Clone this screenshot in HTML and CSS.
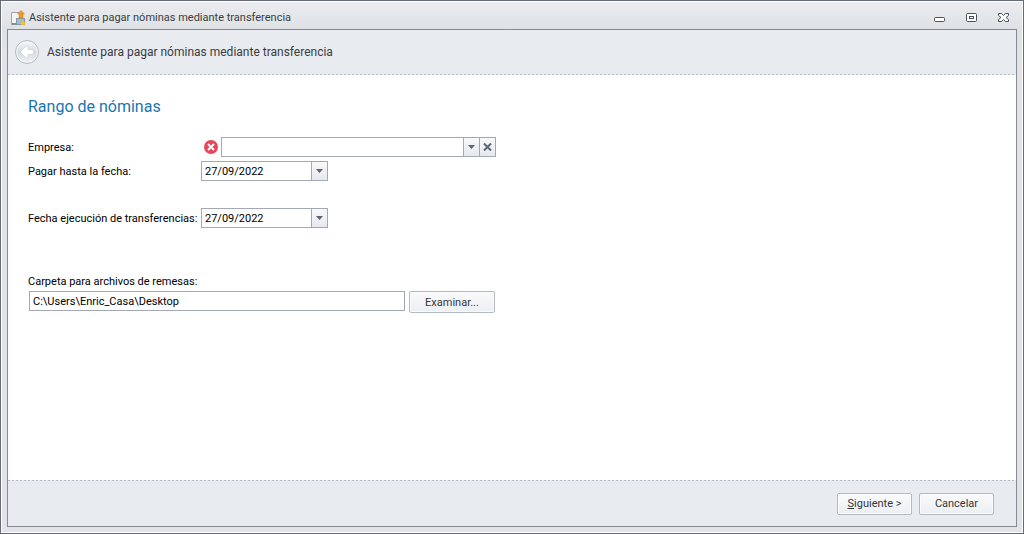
FILE: index.html
```html
<!DOCTYPE html>
<html lang="es">
  <head>
    <meta charset="UTF-8" />
    <meta name="viewport" content="width=device-width, initial-scale=1.0" />
    <title>Asistente para pagar nóminas mediante transferencia</title>
    <link rel="stylesheet" href="styles.css">
  </head>
  <body>
    <div class="window">
      <div class="titlebar">
        <svg class="app-icon" width="16" height="16" viewBox="0 0 16 16" aria-hidden="true">
          <path d="M0.500 2.500h8v12h-8z" fill="#f4f4f2" stroke="#a3a5a8" />
          <path d="M1 13h5v2h-5z" fill="#8b8d90" />
          <rect x="5.500" y="8.500" width="8" height="6" fill="#a9bccb" stroke="#8798a6" />
          <path d="M10 0.500l3.500 3.500h-1.500v4h-4v-4h-1.500z" fill="#f39a1d" stroke="#cf7a10" stroke-width="0.500" />
          <path d="M12 10.500l1 1.500 2 .5-1.500 1 .5 2-2-1-2 1 .5-2-1-1.500 2 0z" fill="#ffc41c" />
        </svg>
        <span class="title">Asistente para pagar nóminas mediante transferencia</span>
        <div class="window-controls">
          <button type="button" class="control" aria-label="Minimizar">
            <svg width="12" height="12" viewBox="0 0 12 12"><rect x="0.5" y="5.5" width="10" height="4" rx="1" fill="#fff" stroke="#4b5157" /></svg>
          </button>
          <button type="button" class="control" aria-label="Maximizar">
            <svg width="12" height="12" viewBox="0 0 12 12"><rect x="0.5" y="1.5" width="10" height="8" rx="1" fill="#fff" stroke="#4b5157" /><rect x="3.5" y="4.5" width="4" height="2" fill="#fff" stroke="#4b5157" /></svg>
          </button>
          <button type="button" class="control" aria-label="Cerrar">
            <svg width="12" height="12" viewBox="0 0 12 12"><path d="M0.500 1.500h3l2 2 2-2h3v2l-2.500 2 2.500 2v2h-3l-2-2-2 2h-3v-2l2.500-2-2.500-2z" fill="#fff" stroke="#4b5157" /></svg>
          </button>
        </div>
      </div>

      <form class="wizard" action="#" method="get">
        <header class="wizard-header">
          <button type="button" class="back" aria-label="Atrás">
            <svg width="24" height="24" viewBox="0 0 24 24">
              <defs>
                <linearGradient id="back-fill" x1="0" y1="0" x2="0" y2="1">
                  <stop offset="0" stop-color="#f3f5f8" />
                  <stop offset="0.500" stop-color="#d5dbe2" />
                  <stop offset="1" stop-color="#eef1f4" />
                </linearGradient>
              </defs>
              <circle cx="12" cy="12" r="11.500" fill="#f6f8fa" stroke="#b3b9c1" />
              <circle cx="12" cy="12" r="10" fill="url(#back-fill)" />
              <path d="M5 12l6-6q2-1 2 1.500v2h4q1.500 0 1.500 1.500v2q0 1.500-1.500 1.500h-4v2q0 2.500-2 1.500z" fill="#fff" stroke="#c3cad2" stroke-width="0.600" stroke-linejoin="round" />
            </svg>
          </button>
          <h1>Asistente para pagar nóminas mediante transferencia</h1>
        </header>

        <main class="page">
          <h2>Rango de nóminas</h2>

          <div class="field">
            <label for="empresa">Empresa:</label>
            <svg class="error" width="14" height="14" viewBox="0 0 14 14" role="img" aria-label="Error">
              <circle cx="7" cy="7" r="7" fill="#e8465a" />
              <path d="M4 4l6 6M10 4l-6 6" stroke="#fff" stroke-width="2" />
            </svg>
            <div class="combo combo-wide">
              <input type="text" id="empresa" name="empresa" />
              <button type="button" aria-label="Desplegar empresas">
                <svg width="7" height="4" viewBox="0 0 7 4"><path d="M0 0h7l-3.500 4z" fill="#5b6470" /></svg>
              </button>
              <button type="button" aria-label="Borrar empresa">
                <svg width="9" height="8" viewBox="0 0 9 8"><path d="M1 0.500l7 7M8 0.500l-7 7" stroke="#5b6470" stroke-width="2" /></svg>
              </button>
            </div>
          </div>

          <div class="field">
            <label for="hasta">Pagar hasta la fecha:</label>
            <div class="combo">
              <input type="text" id="hasta" name="hasta" value="27/09/2022" />
              <button type="button" aria-label="Abrir calendario">
                <svg width="7" height="4" viewBox="0 0 7 4"><path d="M0 0h7l-3.500 4z" fill="#5b6470" /></svg>
              </button>
            </div>
          </div>

          <div class="field field-apart">
            <label for="ejecucion">Fecha ejecución de transferencias:</label>
            <div class="combo">
              <input type="text" id="ejecucion" name="ejecucion" value="27/09/2022" />
              <button type="button" aria-label="Abrir calendario">
                <svg width="7" height="4" viewBox="0 0 7 4"><path d="M0 0h7l-3.500 4z" fill="#5b6470" /></svg>
              </button>
            </div>
          </div>

          <div class="folder">
            <label for="carpeta">Carpeta para archivos de remesas:</label>
            <div class="folder-row">
              <input type="text" id="carpeta" name="carpeta" value="C:\Users\Enric_Casa\Desktop" />
              <button type="button" class="btn btn-browse">Examinar...</button>
            </div>
          </div>
        </main>

        <footer class="wizard-footer">
          <button type="submit" class="btn"><u>S</u>iguiente &gt;</button>
          <button type="button" class="btn">Cancelar</button>
        </footer>
      </form>
    </div>
  </body>
</html>
```

FILE: styles.css
```css
* {
  box-sizing: border-box;
}
body {
  margin: 0;
  font-family: Roboto, Tahoma, sans-serif;
  font-size: 11px;
  color: #000;
}
button,
input {
  font-family: inherit;
  font-size: inherit;
  color: inherit;
}
svg {
  display: block;
}

/* Window frame */
.window {
  display: flex;
  flex-direction: column;
  min-height: 100vh;
  padding: 1px 6px 6px;
  border: 1px solid #646b76;
  background: linear-gradient(#ebecf0, #dfe2e4 28px, #e2e4e9 60px);
  box-shadow: inset 0 0 0 1px #fff;
}
.titlebar {
  display: flex;
  align-items: center;
  height: 27px;
  padding: 4px 7px 0 4px;
  color: #3a3d42;
}
.title {
  margin-left: 2px;
  line-height: 16px;
}
.window-controls {
  display: flex;
  gap: 20px;
  margin-left: auto;
}
.control,
.back {
  padding: 0;
  border: 0;
  background: none;
}

/* Wizard */
.wizard {
  display: flex;
  flex: 1;
  flex-direction: column;
  border: 1px solid #858b91;
  background-color: #e8ebf0;
}
.wizard-header,
.wizard-footer {
  display: flex;
  align-items: center;
  background-image: repeating-linear-gradient(
    90deg,
    #b4bac8 0 2px,
    #e8ebf0 2px 4px
  );
  background-repeat: no-repeat;
  background-size: 100% 1px;
}
.wizard-header {
  gap: 8px;
  height: 45px;
  padding: 0 7px 1px;
  background-position: bottom;
}
.wizard-header h1 {
  margin: 0;
  font-size: 12px;
  font-weight: normal;
  color: #3a3d42;
}
.page {
  flex: 1;
  padding: 20px 20px 0;
  background-color: #fff;
}
.page h2 {
  margin: 0 0 18px;
  font-size: 16px;
  font-weight: normal;
  line-height: 24px;
  color: #1a75b0;
}

/* Fields */
.field {
  display: flex;
  align-items: center;
  margin-bottom: 4px;
}
.field label {
  width: 173px;
  white-space: nowrap;
}
.field-apart {
  margin-top: 27px;
}
.error {
  margin: 0 3px;
}
.combo {
  display: flex;
  width: 127px;
  height: 20px;
  border: 1px solid #a2a9b5;
}
.combo-wide {
  width: 275px;
}
.combo input {
  flex: 1;
  min-width: 0;
  padding: 0 3px;
  border: 0;
}
.combo button {
  display: flex;
  align-items: center;
  justify-content: center;
  width: 16px;
  padding: 0;
  border: 0;
  border-left: 1px solid #a2a9b5;
  background: linear-gradient(#f8f9fb, #e5e9ee);
}
.folder {
  margin-top: 45px;
}
.folder label {
  display: block;
  line-height: 18px;
}
.folder-row {
  display: flex;
  gap: 4px;
  padding-left: 1px;
}
.folder input {
  width: 376px;
  height: 20px;
  padding: 0 3px;
  border: 1px solid #a2a9b5;
}

/* Buttons */
.btn {
  width: 75px;
  height: 22px;
  padding: 0;
  border: 1px solid #b4bac3;
  border-radius: 2px;
  background: linear-gradient(#f9fafb, #eceff3);
  box-shadow: inset 0 0 0 1px #fafbfc;
  color: #34373c;
}
.btn-browse {
  width: 86px;
}
.wizard-footer {
  justify-content: flex-end;
  gap: 7px;
  height: 46px;
  padding: 1px 22px 0 0;
  background-position: top;
}
```
